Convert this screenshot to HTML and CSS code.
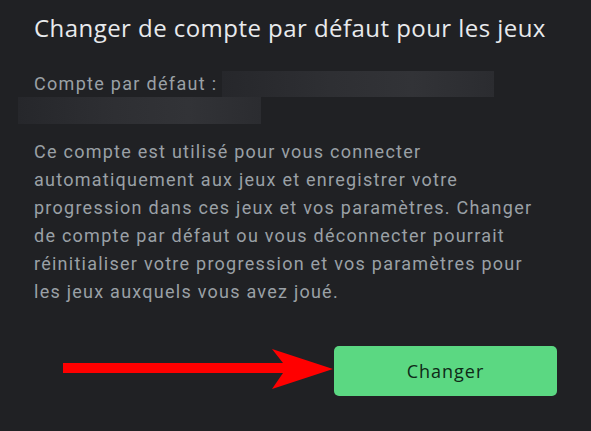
FILE: index.html
```html
<!DOCTYPE html>
<html lang="fr">
<head>
<meta charset="utf-8">
<title>Changer de compte par défaut pour les jeux</title>
<link rel="stylesheet" href="styles.css">
</head>
<body>
<main class="dialog">
  <h1 class="dialog-title">Changer de compte par défaut pour les jeux</h1>
  <div class="account">
    <span class="account-label">Compte par défaut :</span>
    <span class="redact redact-a"></span>
    <span class="redact redact-b"></span>
  </div>
  <p class="dialog-text">Ce compte est utilisé pour vous connecter automatiquement aux jeux et enregistrer votre progression dans ces jeux et vos paramètres. Changer de compte par défaut ou vous déconnecter pourrait réinitialiser votre progression et vos paramètres pour les jeux auxquels vous avez joué.</p>
  <div class="actions">
    <svg class="pointer" width="271" height="50" viewBox="0 0 271 50" aria-hidden="true">
      <polygon points="0,16 220,16 209,2 270,22 209,42 220,26 0,26" fill="#ff0000"/>
    </svg>
    <button class="btn-change" type="button">Changer</button>
  </div>
</main>
</body>
</html>
```

FILE: styles.css
```css
html, body {
  margin: 0;
  padding: 0;
  background: #202124;
}

.dialog {
  padding: 12px 34px 0 34px;
  font-family: Roboto, "Liberation Sans", sans-serif;
}

.dialog-title {
  margin: 0;
  font-family: "Open Sans", Roboto, sans-serif;
  font-weight: 400;
  font-size: 24px;
  line-height: 32px;
  letter-spacing: 0.45px;
  color: #e8eaed;
}

.account {
  position: relative;
  margin-top: 26px;
  height: 54px;
}

.account-label {
  font-size: 18px;
  line-height: 28px;
  color: #9aa0a6;
  letter-spacing: 1.3px;
}

/* blurred-out address */
.redact {
  position: absolute;
  background: linear-gradient(90deg, #26272b 0%, #2e2f33 40%, #323337 70%, #2b2c30 100%);
}
.redact-a {
  left: 188px;
  top: 1px;
  width: 272px;
  height: 26px;
}
.redact-b {
  left: -16px;
  top: 27px;
  width: 243px;
  height: 27px;
}

.dialog-text {
  margin: 14px 0 0 0;
  max-width: 510px;
  font-size: 18px;
  line-height: 28px;
  color: #9aa0a6;
  letter-spacing: 1.25px;
}

.actions {
  display: flex;
  justify-content: flex-end;
  align-items: center;
  margin-top: 39px;
}

.pointer {
  display: block;
  margin-top: 2px;
}

.btn-change {
  width: 223px;
  height: 50px;
  border: none;
  border-radius: 5px;
  background: #5bd882;
  color: #0e2a17;
  font-family: "Open Sans", Roboto, sans-serif;
  font-weight: 500;
  font-size: 18px;
  letter-spacing: 1px;
}
```
